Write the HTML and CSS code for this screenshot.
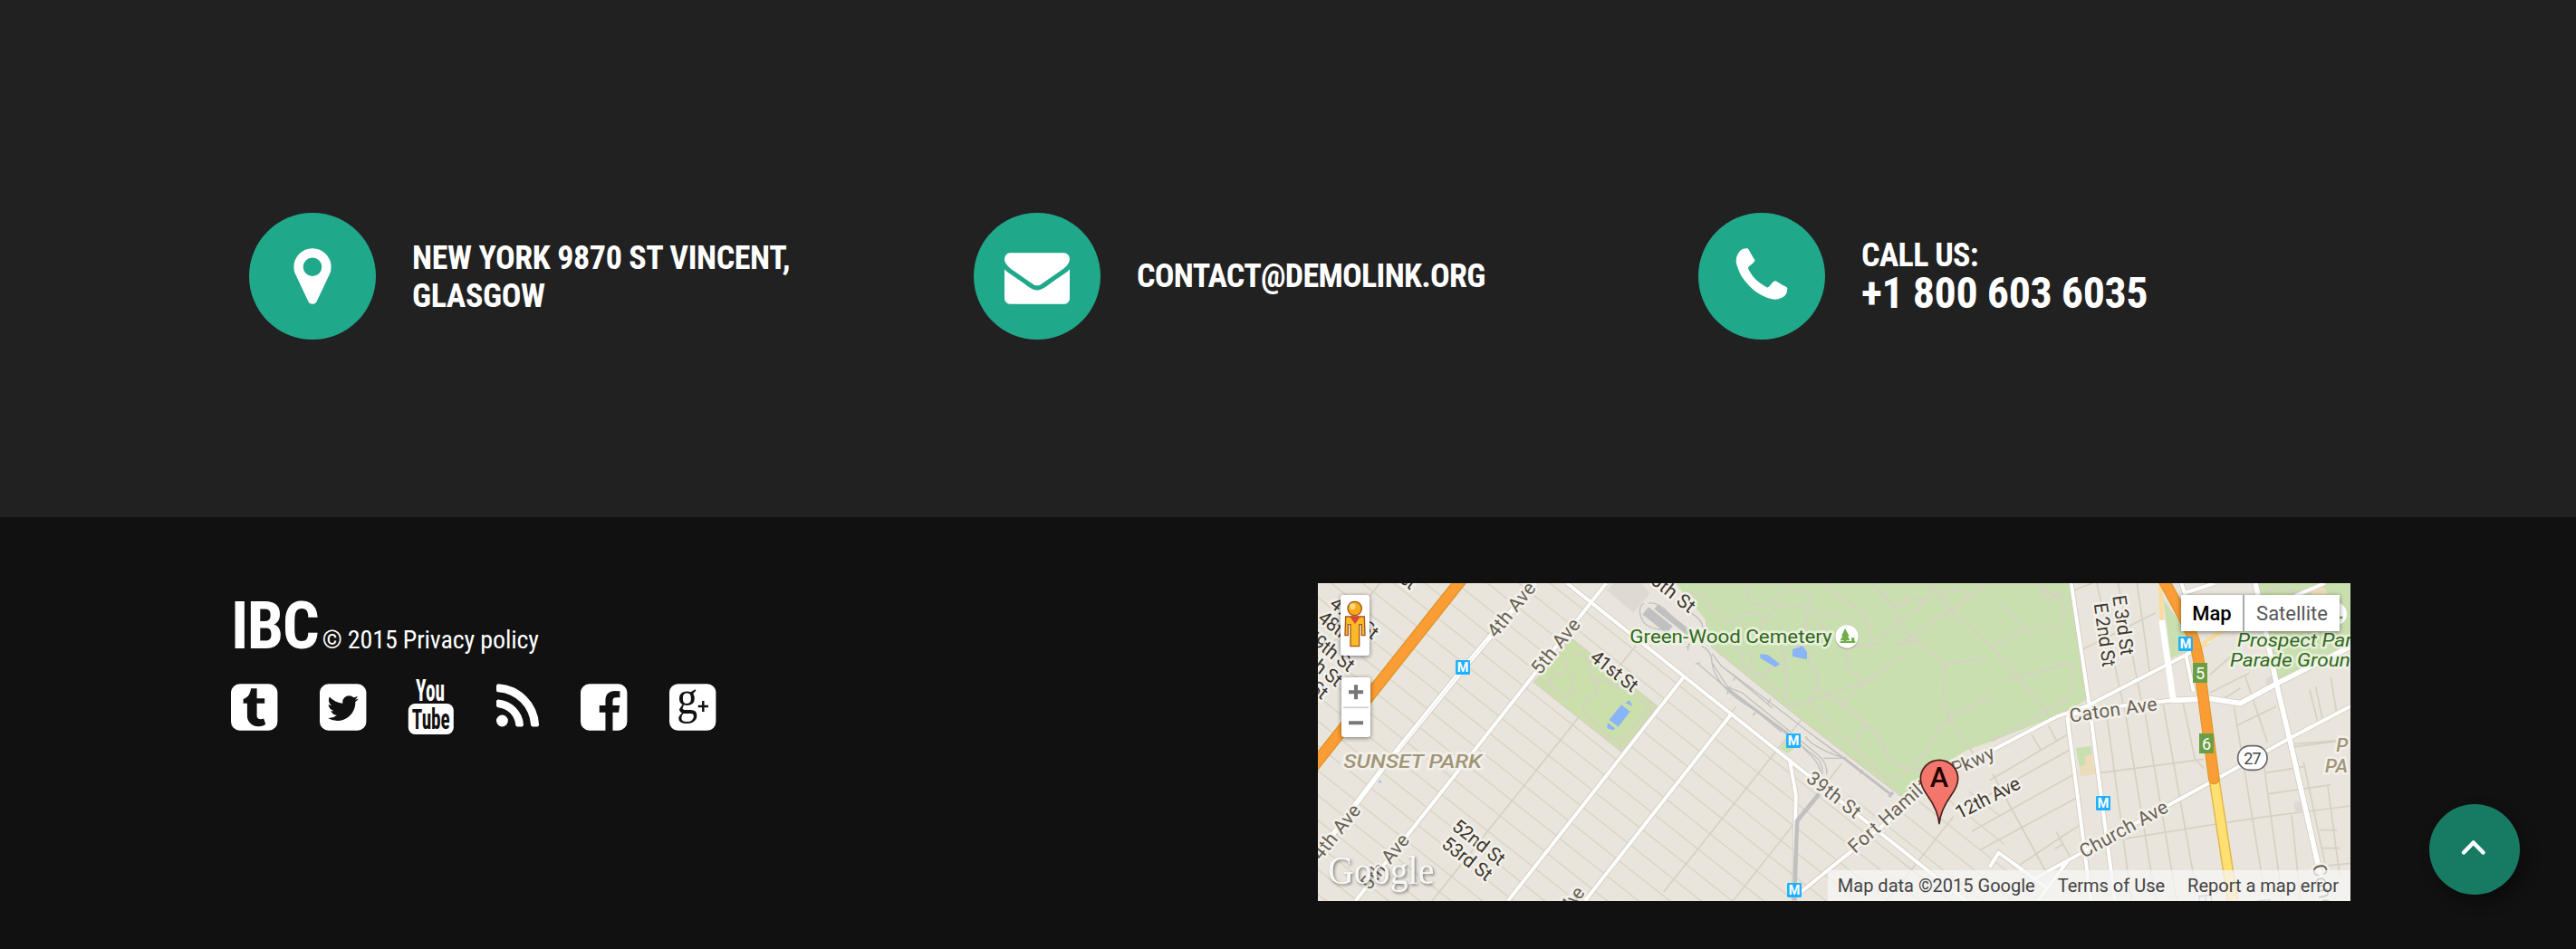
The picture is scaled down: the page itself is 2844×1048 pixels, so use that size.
FILE: index.html
```html
<!DOCTYPE html>
<html lang="en">
<head>
<meta charset="utf-8">
<title>IBC</title>
<link rel="stylesheet" href="styles.css">
</head>
<body>
<section class="contacts">
  <div class="contact">
    <span class="badge"><svg class="badge-icon" viewBox="0 0 1792 1792"><path d="M1152 640q0-106-75-181t-181-75-181 75-75 181 75 181 181 75 181-75 75-181zm256 0q0 109-33 179l-364 774q-16 33-47.5 52t-67.5 19-67.5-19-46.5-52l-365-774q-33-70-33-179 0-212 150-362t362-150 362 150 150 362z"/></svg></span>
    <p class="contact-text address">NEW YORK 9870 ST VINCENT,<br>GLASGOW</p>
  </div>
  <div class="contact">
    <span class="badge"><svg class="badge-icon" viewBox="0 0 1792 1792"><path d="M1792 710v794q0 66-47 113t-113 47h-1472q-66 0-113-47t-47-113v-794q44 49 101 87 362 246 497 345 57 42 92.5 65.5t94.5 48 110 24.5h2q51 0 110-24.5t94.5-48 92.5-65.5q170-123 498-345 57-39 100-87zm0-294q0 79-49 151t-122 123q-376 261-468 325-10 7-42.5 31t-54 38.5-52 32.5-57.5 27-50 9h-2q-23 0-50-9t-57.5-27-52-32.5-54-38.5-42.5-31q-91-64-262-182.5t-205-142.5q-62-42-117-115.5t-55-136.5q0-78 41.5-130t118.5-52h1472q65 0 112.5 47t47.5 113z"/></svg></span>
    <p class="contact-text email">CONTACT@DEMOLINK.ORG</p>
  </div>
  <div class="contact">
    <span class="badge"><svg class="badge-icon" viewBox="0 0 1792 1792"><path d="M1600 1240q0 27-10 70.5t-21 68.5q-21 50-122 106-94 51-186 51-27 0-53-3.5t-57.5-12.5-47-14.5-55.5-20.5-49-18q-98-35-175-83-127-79-264-216t-216-264q-48-77-83-175-3-9-18-49t-20.5-55.5-14.5-47-12.5-57.5-3.5-53q0-92 51-186 56-101 106-122 25-11 68.5-21t70.5-10q14 0 21 3 18 6 53 76 11 19 30 54t35 63.5 31 53.5q3 4 17.5 25t21.5 35.5 7 28.5q0 20-28.5 50t-62 55-62 53-28.5 46q0 9 5 22.5t8.5 20.5 14 24 11.5 19q76 137 174 235t235 174q2 1 19 11.5t24 14 20.5 8.5 22.5 5q18 0 46-28.5t53-62 55-62 50-28.5q14 0 28.5 7t35.5 21.5 25 17.5q25 15 53.5 31t63.5 35 54 30q70 35 76 53 3 7 3 21z"/></svg></span>
    <p class="contact-text phone">CALL US:<br><span class="number">+1 800 603 6035</span></p>
  </div>
</section>

<footer class="footer">
  <div class="about">
    <p class="copyright"><strong class="brand">IBC</strong> <span class="legal">© 2015 Privacy policy</span></p>
    <div class="socials">
      <svg class="social" viewBox="128 0 1536 1792"><path fill-rule="evenodd" d="M1270 1450l-62-183q-44 22-103 22-36 1-62-10.500t-38.500-31.500-17.500-40.500-5-43.500v-393h257v-168h-256v-326h-188q-8 0-9 10-5 44-17.500 87t-39 95-77 95-118.500 68v139h130v418q0 57 21.500 115t65 111 121 85.500 176.500 30.500q69-1 136.500-25t85.500-55zM1664 416v960q0 119-84.500 203.500t-203.500 84.500h-960q-119 0-203.500-84.500t-84.500-203.500v-960q0-119 84.500-203.500t203.500-84.500h960q119 0 203.500 84.500t84.500 203.500z"/></svg>
      <svg class="social" viewBox="128 0 1536 1792"><path d="M1408 610q-56 25-121 34 68-40 93-117-65 38-134 51-61-66-153-66-87 0-148.500 61.500t-61.500 148.500q0 29 5 48-129-7-242-65t-192-155q-29 50-29 106 0 114 91 175-47-1-100-26v1q0 75 50 133.500t123 72.500q-29 8-51 8-13 0-39-4 21 63 74.500 104t121.500 42q-116 90-261 90-26 0-50-3 148 94 322 94 112 0 210-35.500t168-95 120.500-137 75-162 24.500-168.500q0-18-1-27 63-45 105-109zm256-194v960q0 119-84.500 203.500t-203.500 84.500h-960q-119 0-203.500-84.500t-84.500-203.500v-960q0-119 84.500-203.500t203.500-84.500h960q119 0 203.500 84.500t84.500 203.500z"/></svg>
      <svg class="social" viewBox="0 0 51.400 60"><text class="yt" x="9" y="22.500" font-size="33" textLength="32" lengthAdjust="spacingAndGlyphs">You</text><rect x=".8" y="26" width="50" height="34" rx="7.500"/><text class="yt dark" x="4.800" y="54" font-size="31" textLength="42" lengthAdjust="spacingAndGlyphs">Tube</text></svg>
      <svg class="social rss" viewBox="192 0 1408 1792"><path d="M576 1344q0 80-56 136t-136 56-136-56-56-136 56-136 136-56 136 56 56 136zm512 123q2 28-17 48-18 21-47 21h-135q-25 0-43-16.500t-20-41.500q-22-229-184.500-391.500t-391.500-184.500q-25-2-41.500-20t-16.500-43v-135q0-29 21-47 17-17 43-17h5q160 13 306 80.500t259 181.500q114 113 181.500 259t80.500 306zm512 2q2 27-18 47-18 20-46 20h-143q-26 0-44.500-17.500t-19.500-42.500q-12-215-101-408.500t-231.500-336-336-231.500-408.500-102q-25-1-42.500-19.500t-17.500-43.500v-143q0-28 20-46 18-18 44-18h3q262 13 501.500 120t425.500 294q187 186 294 425.500t120 501.500z"/></svg>
      <svg class="social" viewBox="128 0 1536 1792"><path d="M1376 128q119 0 203.500 84.500t84.500 203.500v960q0 119-84.500 203.500t-203.500 84.500h-188v-595h199l30-232h-229v-148q0-56 23.500-84t91.500-28l122-1v-207q-63-9-178-9-136 0-217.500 80t-81.500 226v171h-200v232h200v595h-532q-119 0-203.500-84.500t-84.500-203.500v-960q0-119 84.500-203.500t203.500-84.500h960z"/></svg>
      <svg class="social" viewBox="0 0 51.400 60"><rect y="4.300" width="51.400" height="51.400" rx="9.600"/><text class="gplus" x="8.300" y="36.500" font-size="53" textLength="23" lengthAdjust="spacingAndGlyphs">g</text><path class="plus" d="M37.300 23v12M31.700 29h11.300"/></svg>
    </div>
  </div>

  <div class="map">
    <svg class="map-canvas" viewBox="0 0 3420 1053">
      <defs>
        <pattern id="streets" width="200" height="82" patternUnits="userSpaceOnUse" patternTransform="translate(0 6) skewY(38.400)"><path class="minor" d="M0 41H200"/></pattern>
        <path id="avenues" d="M825 0L2145 1052M955 0L720 298L460 628L125 1052M1210 313L630 1052M1370 433L885 1052M1562 583L1583 700L1578 1052M1600 1023L1995 703Q2060 640 2235 553L2445 443M2495 0L2553 388L2590 673L2640 1052M2482 443L2525 773L2560 1052M3420 408L3220 513L2995 638L2485 918L2365 983M2225 940L2255 893L2415 1010M2485 918L2385 1052M2870 33L2970 0M3235 43L3335 0M2875 238L2900 358M2860 0L2875 45"/>
        <path id="caton" d="M2445 443L2545 408L2875 238L2955 190M2480 438L2590 415L2835 388"/>
        <path id="fourth" d="M720 0L490 273L215 613L-15 918M3105 0L3175 333L3220 523L3315 943L3335 1052"/>
        <path id="parkside" d="M2835 388L2955 383L3055 398L3175 333L3420 210"/>
      </defs>
      <rect width="3420" height="1053" fill="#e9e5dc"/>
      <!-- street grid west of the parkway -->
      <path fill="url(#streets)" d="M0 0H810L2160 1053H0z"/>
      <path fill="url(#streets)" d="M1690 680L2060 1053H2300L2250 700L2060 680L1930 760z"/>

      <g transform="translate(-30 -27)">
        <path class="minor" d="M235 27L30 290M1110 200L400 1090"/>
        <path fill="#dedad3" d="M985 50L1075 125L1130 60L1100 27H1010z"/>
        <path fill="#cadfaa" stroke="#d8cfc6" stroke-width="4" d="M870 210L1155 435L1035 585L745 355z"/>
        <path class="trail" d="M870 260Q940 260 930 330Q970 350 950 400Q910 420 920 410Q900 440 915 460L1000 540L1040 545L1120 450L1150 438M850 275Q850 320 880 335Q860 370 880 385L850 410L800 365Q790 330 850 320M930 345L980 350L1060 385L1130 440M1030 545V580M770 355H800"/>
        <path class="water" d="M1035 430L1064 452L1025 503L995 480zM1062 415L1072 434L1048 424zM990 490L1015 508L1008 514L988 508zM232 682h8v6h-8z"/>
      </g>

      <g transform="translate(1035 -27)">
        <path class="minor" d="M565 480L110 1050M350 435L335 455M700 625L340 1079M1070 800L850 1079"/>
        <path fill="#cadfaf" d="M150 27L250 150L270 240L565 478L900 735L1050 620L1115 580L1200 550L1430 460L1514 412L1460 27z"/>
        <path fill="none" stroke="#d5cfc3" stroke-width="4" d="M250 150L270 240L565 478L900 735"/>
        <path fill="#cadfaa" d="M525 535L495 575L522 590L560 560z"/>
        <path class="trail" d="M200 60Q240 60 265 100Q270 140 330 155Q370 160 380 125Q430 115 435 150Q440 180 420 190Q365 180 350 235L370 260Q370 310 390 315L435 340L510 400L520 428Q570 435 590 418L740 570L840 670Q890 690 920 640Q960 650 980 630M380 27Q385 80 410 95Q460 105 475 90Q480 70 500 65L530 27M545 50Q600 50 600 80Q600 100 560 105L495 100Q470 130 435 150M640 27L750 110L775 120V150L800 185V230L720 240L715 300Q740 340 785 350L590 418L620 370Q690 430 710 430L780 495L735 570M780 495Q830 530 840 580Q870 640 930 640M600 135Q640 150 640 190M560 215Q590 200 580 130Q600 100 720 145L735 180M440 190Q470 215 500 230Q520 300 518 400M400 250Q395 330 440 340Q450 310 515 280M590 290Q600 240 540 230M800 27L870 105L900 180L945 215L1040 295L1180 275M830 50L870 105L915 95V75L985 80L1000 27M985 80Q940 130 880 155M1000 27L1060 120L1160 200M1180 27L1060 120L880 235L945 215M1040 295Q1040 340 1035 400L1055 475L1135 590M1055 475L1000 545Q960 620 925 640M1055 475L1200 400M785 350L900 270M705 450V420L785 350M620 370Q630 330 590 290M800 230Q850 230 830 200L880 170M1020 80L1060 45L1120 60"/>
        <path class="water" d="M430 262L455 264L495 295L480 305L430 275zM537 247L570 235L585 256V280L537 270z"/>
        <path class="rail" d="M45 93Q20 110 40 150Q60 185 130 180M60 93Q100 90 130 130L215 210M200 125Q240 150 240 175M225 295L330 385L520 525M235 235Q270 250 270 290L325 375L500 520M270 260L300 300L350 340L470 440M270 290Q280 370 400 440L530 530M300 300L460 420L590 520L710 610L760 650M320 370L370 390L530 520M580 535Q600 570 710 608M590 520L720 615M640 607H715M560 560L610 600Q640 620 635 660M565 550L620 595Q655 625 650 660M570 570L600 600Q630 630 630 660M215 295L232 290M340 350L352 335M455 425L465 410M405 465L415 455M760 660L770 645M320 395L330 370M185 240L205 225M195 225L190 250"/>
        <path class="yard" stroke-width="32" d="M50 118L130 182"/><path class="yard" stroke-width="20" d="M85 105L195 192"/>
        <path class="yard" stroke-width="9" d="M325 380L520 525M705 605L860 725M857 735L870 720"/>
      </g>

      <g transform="translate(2235 -27)">
        <path class="trail" d="M20 90Q90 160 110 180L230 180Q240 140 235 90L150 27M110 180L0 235M-40 200L40 290L130 390L185 465M40 350L260 290M0 550Q200 430 250 410Q270 390 265 290M155 30L185 85L230 60"/>
        <path class="minor" d="M345 27L435 440M415 27L495 430M478 27L520 320M270 50L330 27M300 245L540 125M375 440L460 1079M435 430L540 1079M500 430L610 1079M565 430L680 1079M630 420L670 610L700 640M360 655L700 610M400 880L740 825L910 800L1185 765M800 440L905 1079M835 330L910 555M890 570L960 1079M805 500L940 435M720 390L850 325M750 420L820 375M720 330L800 260M995 570L1185 545M1000 560L1185 545M905 655L1030 635M915 725L1120 695M1030 620L1110 1000M1050 380L1080 500M1070 370L1095 490M1120 340L1140 460M990 795L1020 1079M1090 965L1185 955M1085 845H1140M1090 905H1150M1110 700L1150 1000M0 660L180 990M-10 680L245 530M-70 760L255 580M-70 850L270 660M-40 910L275 740M90 960L300 820M130 530L160 580M185 500L212 550M210 850L260 940M207 907L235 890"/>
        <path fill="#cadfaf" d="M275 573L327 567L330 610L335 660L288 640z"/><path fill="#ecdcba" d="M305 600L330 593L340 660L288 667V637L308 628z"/>
        <path fill="#cadfaf" d="M875 27H1185V245L950 350L905 205zM565 80L615 150L640 200V255L590 275z"/>
        <path fill="#ecdcba" d="M1050 50L1090 32L1110 60L1070 90z"/>
        <path fill="#dedad3" d="M905 345L925 330L935 350L925 365H905zM1000 750h28v35h-28z"/>
        <path class="trail" d="M900 60Q970 20 1000 60L1050 90M1080 90L1170 230"/>
      </g>

      <g class="roads">
        <use href="#avenues" class="casing"/><use href="#caton" class="casing"/><use href="#fourth" class="casing wide"/><use href="#parkside" class="casing wide"/>
        <use href="#avenues" class="surface"/><use href="#caton" class="surface"/><use href="#fourth" class="surface wide"/><use href="#parkside" class="surface wide"/>
        <path stroke="#ddd8ce" stroke-width="2" d="M560 193L490 273L270 550"/>
        <path stroke="#fff" stroke-width="20" stroke-linecap="round" d="M2796 130L2833 386"/>
        <path stroke="#fbdc9c" stroke-width="13" d="M2790 0L2795 123M2920 225Q2940 180 3020 150L3110 115"/>
        <path stroke="#c0c0c0" stroke-width="14" d="M1660 698L1587 788L1580 973L1578 1052"/>
        <path stroke="#dd9328" stroke-width="40" d="M490 -30L-30 626"/><path stroke="#f99d34" stroke-width="33" d="M490 -30L-30 626"/>
        <path stroke="#e3b752" stroke-width="37" d="M2968 645L3030 1052"/><path stroke="#ffe070" stroke-width="28" d="M2968 645L3030 1052"/>
        <path stroke="#dd9328" stroke-width="38" stroke-linecap="round" d="M2790 -30Q2880 130 2902 190Q2920 250 2925 323L2968 648"/><path stroke="#f99d34" stroke-width="32" stroke-linecap="round" d="M2790 -30Q2880 130 2902 190Q2920 250 2925 323L2968 648"/>
      </g>

      <g class="labels">
        <g class="street">
          <text transform="translate(165 -87) rotate(38)" textLength="180">46th St</text>
          <text transform="translate(35 75) rotate(38)" textLength="185">47th St</text>
          <text transform="translate(-4 122) rotate(38)" textLength="185">48th St</text>
          <text transform="translate(-45 182) rotate(38)" textLength="185">49th St</text>
          <text transform="translate(-85 232) rotate(38)" textLength="185">50th St</text>
          <text transform="translate(-125 280) rotate(38)" textLength="175">51st St</text>
          <text transform="translate(898 253) rotate(38)" textLength="180">41st St</text>
          <text transform="translate(440 813) rotate(38)" textLength="203">52nd St</text>
          <text transform="translate(406 871) rotate(38)" textLength="192">53rd St</text>
          <text transform="translate(1070 -24) rotate(38)" textLength="203">36th St</text>
          <text transform="translate(2125 783) rotate(-27)" textLength="232">12th Ave</text>
          <text transform="translate(2632 43) rotate(82)" textLength="200">E 3rd St</text>
          <text transform="translate(2570 68) rotate(82)" textLength="213">E 2nd St</text>
        </g>
        <g class="avenue">
          <text transform="translate(590 184) rotate(-51)" textLength="214">4th Ave</text>
          <text transform="translate(736 306) rotate(-51)" textLength="216">5th Ave</text>
          <text transform="translate(10 920) rotate(-51)" textLength="214">4th Ave</text>
          <text transform="translate(170 1020) rotate(-51)" textLength="216">5th Ave</text>
          <text transform="translate(792 1143) rotate(-51)" textLength="150">6th Ave</text>
          <text transform="translate(1614 654) rotate(38)" textLength="208">39th St</text>
          <path id="pkwy" fill="none" d="M1780 898L2015 687Q2065 648 2125 631L2290 560"/>
          <text><textPath href="#pkwy" textLength="572">Fort Hamilton Pkwy</textPath></text>
          <text transform="translate(2492 461) rotate(-8)" textLength="293">Caton Ave</text>
          <text transform="translate(2537 912) rotate(-29)" textLength="324">Church Ave</text>
          <text transform="translate(3293 936) rotate(78)" textLength="180">Coney</text>
          <text transform="translate(2915 1030) rotate(84)" textLength="140" fill-opacity=".6">E 7th</text>
          <text transform="translate(3110 1045) rotate(84)" textLength="140" fill-opacity=".6">E 9th</text>
        </g>
        <g class="area">
          <text x="85" y="613" textLength="458" lengthAdjust="spacingAndGlyphs">SUNSET PARK</text>
          <text x="3373" y="558">P</text><text x="3336" y="626">PA</text>
        </g>
        <g class="park">
          <text x="1033" y="199" textLength="670" lengthAdjust="spacingAndGlyphs">Green-Wood Cemetery</text>
          <text class="slanted" x="3045" y="210" textLength="414" lengthAdjust="spacingAndGlyphs">Prospect Park</text>
          <text class="slanted" x="3021" y="275" textLength="436" lengthAdjust="spacingAndGlyphs">Parade Ground</text>
        </g>
      </g>

      <g>
        <circle cx="1752" cy="180" r="39" fill="#8a8a80" fill-opacity=".5"/><circle cx="1752" cy="177" r="38" fill="#fff"/><path fill="#6fae48" d="M1746 150L1760 175H1755L1762 190H1750V192H1767V181H1777V192H1780V198H1730V192H1742V190H1730L1738 175H1734z"/>
        <circle cx="3370" cy="102" r="38" fill="#fff"/><path fill="#6fae48" d="M3376 110h18v8h-18z"/>
      </g>
      <g class="metro">
        <rect x="456" y="255" width="48" height="48" rx="4"/><text x="480" y="294">M</text>
        <rect x="1551" y="498" width="48" height="48" rx="4"/><text x="1575" y="537">M</text>
        <rect x="1554" y="993" width="48" height="48" rx="4"/><text x="1578" y="1032">M</text>
        <rect x="2850" y="177" width="48" height="48" rx="4"/><text x="2874" y="216">M</text>
        <rect x="2577" y="705" width="48" height="48" rx="4"/><text x="2601" y="744">M</text>
      </g>
      <g class="exit">
        <rect x="2898" y="264" width="48" height="66"/><text x="2922" y="317">5</text>
        <rect x="2919" y="498" width="48" height="66"/><text x="2943" y="551">6</text>
      </g>
      <rect x="3047" y="539" width="97" height="80" rx="39" fill="#fff" stroke="#666" stroke-width="5"/><text class="route" x="3096" y="599" textLength="58">27</text>
      <path fill="#f3766c" stroke="#4a1f1c" stroke-width="5" stroke-linejoin="round" d="M2058 797C2055 765 2045 740 2020 705C2003 682 1996 668 1996 648A62 62 0 0 1 2120 648C2120 668 2113 682 2096 705C2071 740 2061 765 2058 797z"/><text class="marker" x="2058" y="675">A</text>
      <text class="google" x="33" y="995" textLength="352" lengthAdjust="spacingAndGlyphs">Google</text>
    </svg>

    <div class="pegman"><svg viewBox="0 0 96 201" width="32" height="67"><path d="M17 72h62l2 62H70V98h-8v72H33V98h-8v36H15z" fill="#fabb26" stroke="#a4561b" stroke-width="4"/><path d="M30 71h36L48 96z" fill="#d94436"/><circle cx="47" cy="45" r="23" fill="#f7a81b" stroke="#a4561b" stroke-width="4"/><circle cx="40" cy="38" r="10" fill="#fddb7b"/></svg></div>
    <div class="zoom"><svg viewBox="0 0 96 198" width="32" height="66"><path stroke="#777" stroke-width="12" d="M24 49h48M48 25v48M24 151h48"/><path stroke="#ccc" stroke-width="5" d="M6 100h84"/></svg></div>
    <div class="types"><span class="type active">Map</span><span class="type">Satellite</span></div>
    <div class="attribution"><span>Map data ©2015 Google</span><span>Terms of Use</span><span>Report a map error</span></div>
  </div>
</footer>

<a class="to-top"><svg viewBox="0 0 100 100" width="100" height="100"><path d="M38 53.500L48.700 42.500L59.500 53.500" fill="none" stroke="#fff" stroke-width="4.500" stroke-linecap="round" stroke-linejoin="round"/></svg></a>
</body>
</html>
```
FILE: styles.css
```css
* { box-sizing: border-box; }
body {
  margin: 0;
  height: 1048px;
  overflow: hidden;
  background: #111;
  color: #fff;
  font-family: "Roboto Condensed", Roboto, sans-serif;
}
p { margin: 0; }
svg { display: block; flex: none; }

.contacts {
  height: 571px;
  padding: 39px 0 0 275px;
  background: #212121;
  display: grid;
  grid-template-columns: repeat(3, 800px);
  align-items: center;
}
.contact { display: flex; align-items: center; gap: 40px; }
.badge {
  flex: none;
  width: 140px;
  height: 140px;
  border-radius: 50%;
  background: #20a88a;
  display: flex;
  align-items: center;
  justify-content: center;
}
.badge-icon { width: 72px; height: 72px; fill: #fff; }
.contact-text { font-size: 36px; font-weight: 700; line-height: 42px; letter-spacing: -.7px; white-space: nowrap; }
.address { letter-spacing: -.4px; padding-top: 2px; }
.number { font-size: 48px; letter-spacing: -.45px; }

.footer {
  height: 477px;
  padding: 73px 249px 0 255px;
  display: flex;
  justify-content: space-between;
  align-items: flex-start;
}
.about { padding-top: 6px; }
.copyright { white-space: nowrap; line-height: 84px; height: 96px; }
.brand { font-size: 72px; letter-spacing: -1.600px; }
.legal { font-size: 28px; letter-spacing: -.15px; margin-left: 1px; }
.socials { display: flex; gap: 46.300px; margin-top: 5px; }
.social { width: 51.400px; height: 60px; fill: #fff; overflow: visible; }
.rss { width: 47.100px; }
.yt { font-family: "Roboto Condensed", sans-serif; font-weight: 700; }
.dark { fill: #111; }
.gplus { font-family: "Liberation Serif", serif; fill: #111; }
.plus { stroke: #111; stroke-width: 2.500px; fill: none; }

.map { position: relative; width: 1140px; height: 351px; overflow: hidden; font-family: Roboto, sans-serif; }
.map-canvas { width: 1140px; height: 351px; }
.minor { stroke: #d6d0c4; stroke-width: 5px; fill: none; }
.trail { stroke: #d9cfc8; stroke-width: 5px; fill: none; }
.rail { stroke: #c0c0c0; stroke-width: 4px; fill: none; }
.yard { stroke: #c0c0c0; fill: none; }
.water { fill: #8ab4f8; }
.roads { fill: none; }
.casing { stroke: #d2ccc0; stroke-width: 17px; }
.surface { stroke: #fff; stroke-width: 12px; stroke-linejoin: round; }
.casing.wide { stroke-width: 22px; }
.surface.wide { stroke-width: 17px; }
.labels text { font-size: 63px; stroke: #f4f2ed; stroke-opacity: .85; stroke-width: 16px; stroke-linejoin: round; paint-order: stroke; }
.street { fill: #3b362c; }
.avenue { fill: #686152; }
.area { fill: #a09576; font-style: italic; font-weight: 500; }
.park { fill: #33691e; }
.labels .park text { stroke: #eef4e4; stroke-opacity: .75; }
.slanted { font-style: italic; }
.metro { fill: #1fb1ff; }
.metro text { fill: #fff; font-size: 43px; font-weight: 700; text-anchor: middle; }
.exit { fill: #6b9e45; }
.exit text { fill: #fff; font-size: 54px; text-anchor: middle; }
.route { fill: #444; font-size: 54px; text-anchor: middle; }
.marker { fill: #200; font-size: 92px; text-anchor: middle; font-weight: 500; }
.google { font-family: "Liberation Serif", serif; font-size: 136px; fill: #fff; fill-opacity: .9; filter: drop-shadow(4px 5px 4px rgba(0, 0, 0, .5)); }

.pegman, .zoom { position: absolute; background: #fff; border-radius: 3px; box-shadow: 0 1px 5px rgba(0, 0, 0, .5); }
.pegman { left: 25px; top: 13px; }
.zoom { left: 26px; top: 104px; }
.types { position: absolute; left: 953px; top: 13px; display: flex; gap: 2px; background: #aaa; box-shadow: 0 1px 5px rgba(0, 0, 0, .5); }
.type { background: #fff; height: 40px; line-height: 41px; font-size: 22px; color: #565656; width: 105px; text-align: center; }
.type.active { width: 68px; color: #000; font-weight: 500; }
.attribution {
  position: absolute;
  right: 0;
  bottom: 0;
  height: 34px;
  padding: 0 13px 0 11px;
  display: flex;
  gap: 25px;
  line-height: 34px;
  font-size: 20px;
  color: #444;
  white-space: nowrap;
  background: rgba(245, 245, 245, .75);
}

.to-top {
  position: fixed;
  right: 62px;
  bottom: 60px;
  width: 100px;
  height: 100px;
  border-radius: 50%;
  background: #177b63;
  box-shadow: 6px 8px 16px rgba(0, 0, 0, .4);
}
```
